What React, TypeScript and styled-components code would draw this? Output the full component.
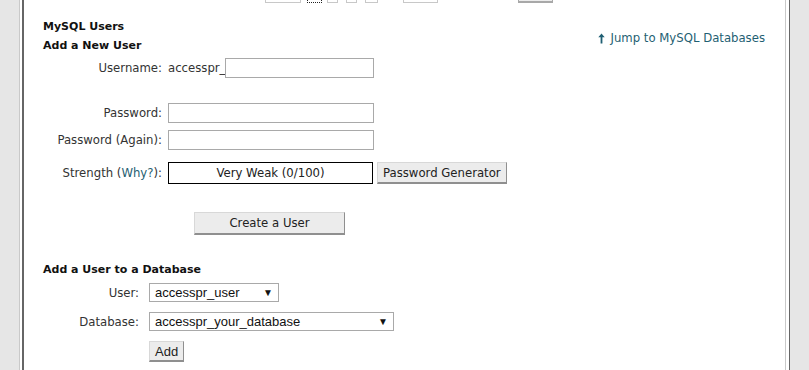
import styled, { createGlobalStyle } from 'styled-components'

const GlobalStyle = createGlobalStyle`
    html, body {
        margin: 0;
        padding: 0;
        background: #e6e6e6;
    }
    body {
        font-family: "DejaVu Sans", Verdana, sans-serif;
        font-size: 11.7px;
        color: #333;
    }
`;

const Page = styled.div`
    width: 809px;
    height: 370px;
    overflow: hidden;
    background: #e6e6e6;
`;

const Frame = styled.div`
    margin-left: 19px;
    width: 771px;
    box-sizing: border-box;
    height: 370px;
    background: #fff;
    border-left: 1px solid #c9c9c9;
    border-right: 1px solid #666;
    padding: 0 3px 0 2px;
`;

const Content = styled.div`
    height: 100%;
    box-sizing: border-box;
    border-left: 2px solid #666;
    border-right: 1px solid #c9c9c9;
    padding: 0 20px 0 19px;
`;

const PagerStrip = styled.div`
    height: 3px;
    overflow: hidden;
    display: flex;
    align-items: flex-end;
    padding-left: 222px;
`;

interface IPagerBox {
    w: number;
    gap: number;
    dotted?: boolean;
    dark?: boolean;
}

const PagerBox = styled.div<IPagerBox>`
    flex: none;
    width: ${({ w }) => w}px;
    height: 12px;
    margin-left: ${({ gap }) => gap}px;
    box-sizing: border-box;
    border: 1px ${({ dotted }) => (dotted ? 'dotted' : 'solid')};
    border-bottom-width: ${({ dark }) => (dark ? '2px' : '1px')};
    border-color: ${({ dark, dotted }) => (dark ? '#a8a8a8' : dotted ? '#222' : '#c8c8c8')};
    background: ${({ dark }) => (dark ? '#ececec' : '#fff')};
`;

const TitleRow = styled.div`
    display: flex;
    justify-content: space-between;
    align-items: flex-start;
    margin-top: 15px;
`;

const Heading = styled.h3`
    margin: 0;
    font-size: 11px;
    font-weight: 700;
    color: #111;
    line-height: 18px;
`;

const SubHeading = styled(Heading)<{ top?: number }>`
    margin-top: ${({ top }) => top ?? 1}px;
`;

const JumpLink = styled.a`
    margin-top: 12px;
    display: flex;
    align-items: center;
    gap: 5px;
    color: #1f5f73;
    text-decoration: none;
    line-height: 16px;
    svg {
        flex: none;
    }
`;

interface IFormGrid {
    labelWidth: number;
    colGap: number;
}

const FormGrid = styled.div<IFormGrid>`
    display: grid;
    grid-template-columns: ${({ labelWidth }) => labelWidth}px auto;
    column-gap: ${({ colGap }) => colGap}px;
    align-items: center;
    justify-items: start;
`;

const Label = styled.label<{ rowTop?: number }>`
    justify-self: end;
    white-space: nowrap;
    margin-top: ${({ rowTop }) => rowTop ?? 0}px;
`;

const Field = styled.div<{ rowTop?: number }>`
    display: flex;
    align-items: center;
    gap: 4px;
    margin-top: ${({ rowTop }) => rowTop ?? 0}px;
`;

const UserField = styled(Field)`
    width: 206px;
    gap: 0;
    input {
        flex: 1;
        width: auto;
        min-width: 0;
    }
`;

const TextInput = styled.input`
    width: 206px;
    height: 20px;
    box-sizing: border-box;
    border: 1px solid #a9a9a9;
    padding: 1px 3px;
    font: inherit;
    margin: 0;
    background: #fff;
`;

const StrengthMeter = styled.div`
    width: 205px;
    height: 22px;
    box-sizing: border-box;
    border: 1px solid #000;
    display: flex;
    align-items: center;
    justify-content: center;
    color: #222;
`;

const GrayButton = styled.button<{ w?: number; h?: number }>`
    width: ${({ w }) => (w ? `${w}px` : 'auto')};
    height: ${({ h }) => h ?? 22}px;
    box-sizing: border-box;
    margin: 0;
    padding: 0 5px;
    font-family: "DejaVu Sans", Verdana, sans-serif;
    font-size: 11.7px;
    color: #222;
    background: #ececec;
    border: 1px solid #a7a7a7;
    border-right-color: #8f8f8f;
    border-bottom: 2px solid #8f8f8f;
    border-top-color: #d8d8d8;
    border-left-color: #d8d8d8;
    cursor: pointer;
`;

const WhyLink = styled.a`
    color: #1f5f73;
    text-decoration: none;
`;

const CreateRow = styled.div`
    padding-left: 151px;
    margin-top: 28px;
`;

const Select = styled.div<{ w: number }>`
    width: ${({ w }) => w}px;
    height: 19px;
    box-sizing: border-box;
    border: 1px solid #a9a9a9;
    display: flex;
    align-items: center;
    justify-content: space-between;
    padding: 0 5px 0 5px;
    font-family: "Liberation Sans", Arial, sans-serif;
    font-size: 13px;
    color: #111;
    background: #fff;
    span:last-child {
        font-size: 10px;
        color: #111;
    }
`;

const AddButton = styled(GrayButton)`
    font-family: "Liberation Sans", Arial, sans-serif;
    font-size: 13px;
    padding: 0 5px;
`;

const ArrowUp = () => (
    <svg width="7" height="11" viewBox="0 0 7 11">
        <path d="M3.5 0.5 L0.3 4.2 H2.6 V10.5 H4.4 V4.2 H6.7 Z" fill="#1f5f73" />
    </svg>
);

export default function App() {
    return (
        <Page>
            <GlobalStyle />
            <Frame>
                <Content>
                    <PagerStrip>
                        <PagerBox w={36} gap={0} />
                        <PagerBox w={15} gap={6} dotted />
                        <PagerBox w={11} gap={5} />
                        <PagerBox w={11} gap={8} />
                        <PagerBox w={13} gap={8} />
                        <PagerBox w={35} gap={25} />
                        <PagerBox w={35} gap={80} dark />
                    </PagerStrip>

                    <TitleRow>
                        <div>
                            <Heading>MySQL Users</Heading>
                            <SubHeading>Add a New User</SubHeading>
                        </div>
                        <JumpLink href="#">
                            <ArrowUp />
                            Jump to MySQL Databases
                        </JumpLink>
                    </TitleRow>

                    <FormGrid labelWidth={119} colGap={6}>
                        <Label rowTop={3}>Username:</Label>
                        <UserField rowTop={3}>
                            <span>accesspr_</span>
                            <TextInput type="text" />
                        </UserField>

                        <Label rowTop={25}>Password:</Label>
                        <Field rowTop={25}>
                            <TextInput type="password" />
                        </Field>

                        <Label rowTop={7}>Password (Again):</Label>
                        <Field rowTop={7}>
                            <TextInput type="password" />
                        </Field>

                        <Label rowTop={12}>
                            Strength (<WhyLink href="#">Why?</WhyLink>):
                        </Label>
                        <Field rowTop={12}>
                            <StrengthMeter>Very Weak (0/100)</StrengthMeter>
                            <GrayButton h={22}>Password Generator</GrayButton>
                        </Field>
                    </FormGrid>

                    <CreateRow>
                        <GrayButton w={151} h={23}>Create a User</GrayButton>
                    </CreateRow>

                    <SubHeading top={26}>Add a User to a Database</SubHeading>

                    <FormGrid labelWidth={96} colGap={10}>
                        <Label rowTop={4}>User:</Label>
                        <Field rowTop={4}>
                            <Select w={130}>
                                <span>accesspr_user</span>
                                <span>▼</span>
                            </Select>
                        </Field>

                        <Label rowTop={10}>Database:</Label>
                        <Field rowTop={10}>
                            <Select w={245}>
                                <span>accesspr_your_database</span>
                                <span>▼</span>
                            </Select>
                        </Field>

                        <div />
                        <Field rowTop={10}>
                            <AddButton h={21}>Add</AddButton>
                        </Field>
                    </FormGrid>
                </Content>
            </Frame>
        </Page>
    )
}
